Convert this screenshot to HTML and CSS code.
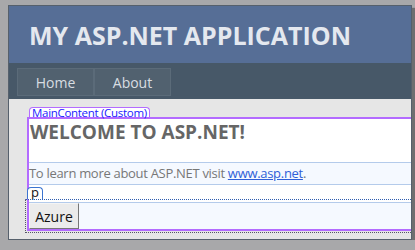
FILE: index.html
```html
<!DOCTYPE html>
<html lang="en">
<head>
    <meta charset="UTF-8">
    <title>My ASP.NET Application</title>
    <link rel="stylesheet" href="styles.css">
</head>
<body>
    <div class="window">
        <!-- 页头 -->
        <div class="header">
            <h1 class="title">MY ASP.NET APPLICATION</h1>
        </div>

        <!-- 菜单 -->
        <div class="menu">
            <a class="menu-item" href="#">Home</a>
            <a class="menu-item" href="#">About</a>
        </div>

        <!-- 主体 -->
        <div class="main">
            <span class="tag tag-region">MainContent (Custom)</span>
            <div class="region">
                <h2 class="welcome">WELCOME TO ASP.NET!</h2>
                <p class="intro">To learn more about ASP.NET visit <a href="#">www.asp.net</a>.</p>
                <div class="p-row">
                    <span class="tag tag-p">p</span>
                </div>
                <div class="p-block">
                    <div class="p-inner">
                        <button class="azure">Azure</button>
                    </div>
                </div>
            </div>
        </div>
    </div>
</body>
</html>
```

FILE: styles.css
```css
/* 全局 */
body {
    margin: 0;
    padding: 5px 0 0 8px;
    background-color: #a8a8aa;
    font-family: 'Open Sans', sans-serif;
}

.window {
    box-sizing: border-box;
    width: 404px;
    height: 235px;
    border: 1px solid #56606c;
    overflow: hidden;
    background-color: #e6e6e6;
    box-shadow: 3px 3px 1px #6e6e70;
}

/* 页头 */
.header {
    height: 57px;
    background-color: #566e96;
    display: flex;
    align-items: center;
    padding-left: 20px;
}
.title {
    margin: 0;
    font-size: 25px;
    font-weight: 700;
    color: #e4e8ef;
}

/* 菜单 */
.menu {
    height: 36px;
    box-sizing: border-box;
    background-color: #475868;
    display: flex;
    padding: 5px 0 0 8px;
}
.menu-item {
    box-sizing: border-box;
    width: 77px;
    height: 28px;
    border: 1px solid #5b6b79;
    background-color: #51616f;
    color: #d8dde2;
    font-size: 14px;
    text-decoration: none;
    display: flex;
    align-items: center;
    justify-content: center;
}

/* 主体 */
.main {
    padding: 8px 0 0 18px;
}
.tag {
    display: block;
    width: max-content;
    box-sizing: border-box;
    background-color: #fff;
    border-radius: 4px 4px 0 0;
    padding: 0 2px;
}
.tag-region {
    height: 10px;
    margin-left: 2px;
    border: 1px solid #b36bff;
    border-bottom: none;
    color: #1a1aff;
    font-size: 11.5px;
    letter-spacing: -0.3px;
    line-height: 10px;
}
.region {
    margin-right: -20px;
    border: 2px solid #b36bff;
    background-color: #fff;
}
.welcome {
    margin: 0;
    box-sizing: border-box;
    height: 43px;
    padding: 1px 0 0 1px;
    font-size: 19px;
    line-height: 24px;
    font-weight: 700;
    color: #666;
}
.intro {
    margin: 0;
    height: 21px;
    border-top: 1px solid #b4cbeb;
    border-bottom: 1px solid #b4cbeb;
    background-color: #f5f9ff;
    font-size: 13px;
    letter-spacing: -0.3px;
    line-height: 21px;
    color: #777;
}
.intro a {
    color: #2f5fd8;
}
.p-row {
    height: 14px;
    padding-top: 2px;
    box-sizing: border-box;
}
.tag-p {
    height: 12px;
    margin-left: -2px;
    border: 1px solid #3b74d0;
    border-bottom: none;
    color: #111;
    font-size: 13px;
    line-height: 9px;
    padding: 0 3px;
}
.p-block {
    position: relative;
    padding-top: 3px;
}
.p-block::after {
    content: "";
    position: absolute;
    left: -4px;
    right: 0;
    top: 0;
    bottom: -4px;
    border-top: 1px dotted #2e5db0;
    border-left: 1px dotted #556;
    border-bottom: 1px dotted #556;
}
.p-inner {
    height: 27px;
    box-sizing: border-box;
    border-top: 1px solid #b4cbeb;
    background-color: #f5f9ff;
}
.azure {
    display: block;
    height: 26px;
    width: 50px;
    margin: 0;
    padding: 0;
    border: 1px solid;
    border-color: #f4f4f4 #777 #777 #f4f4f4;
    background-color: #ebebeb;
    font-family: 'Open Sans', sans-serif;
    font-size: 14px;
    color: #111;
}
```
